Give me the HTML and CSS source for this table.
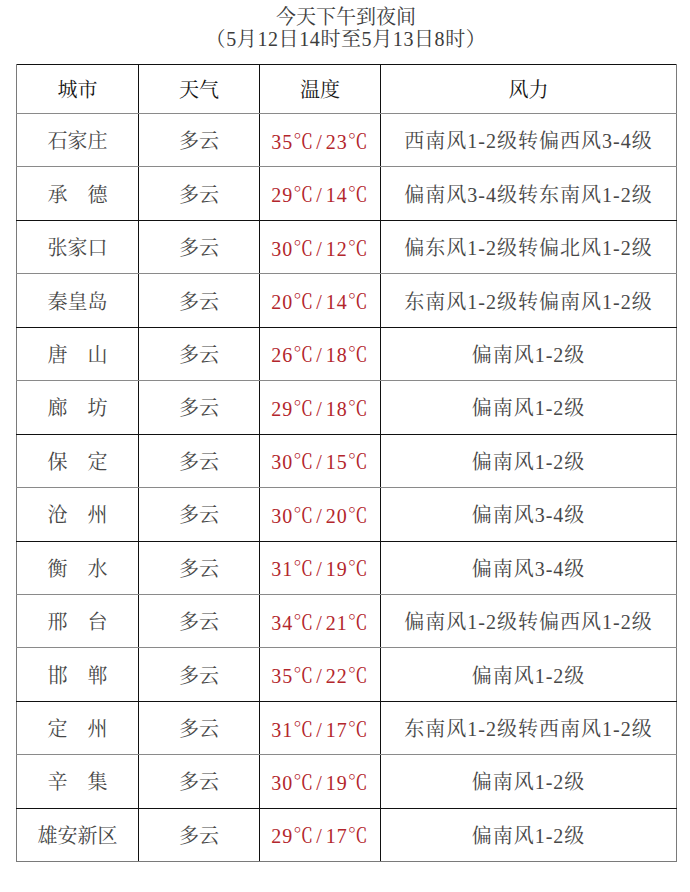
FILE: index.html
```html
<!DOCTYPE html>
<html lang="zh-CN">
<head>
<meta charset="utf-8">
<title>今天下午到夜间</title>
<link rel="stylesheet" href="styles.css">
</head>
<body>
<div class="page">
  <div class="title">
    <div>今天下午到夜间</div>
    <div class="sub">（5月12日14时至5月13日8时）</div>
  </div>
  <table class="wx">
    <colgroup>
      <col class="c1"><col class="c2"><col class="c3"><col class="c4">
    </colgroup>
    <thead>
      <tr class="head"><th>城市</th><th>天气</th><th>温度</th><th>风力</th></tr>
    </thead>
    <tbody>
      <tr><td>石家庄</td><td>多云</td><td class="t">35<span class="deg">℃</span><span class="sl">/</span>23<span class="deg">℃</span></td><td class="w">西南风1-2级转偏西风3-4级</td></tr>
      <tr class="dk"><td>承　德</td><td>多云</td><td class="t">29<span class="deg">℃</span><span class="sl">/</span>14<span class="deg">℃</span></td><td class="w">偏南风3-4级转东南风1-2级</td></tr>
      <tr><td>张家口</td><td>多云</td><td class="t">30<span class="deg">℃</span><span class="sl">/</span>12<span class="deg">℃</span></td><td class="w">偏东风1-2级转偏北风1-2级</td></tr>
      <tr class="dk"><td>秦皇岛</td><td>多云</td><td class="t">20<span class="deg">℃</span><span class="sl">/</span>14<span class="deg">℃</span></td><td class="w">东南风1-2级转偏南风1-2级</td></tr>
      <tr><td>唐　山</td><td>多云</td><td class="t">26<span class="deg">℃</span><span class="sl">/</span>18<span class="deg">℃</span></td><td class="w">偏南风1-2级</td></tr>
      <tr class="dk"><td>廊　坊</td><td>多云</td><td class="t">29<span class="deg">℃</span><span class="sl">/</span>18<span class="deg">℃</span></td><td class="w">偏南风1-2级</td></tr>
      <tr><td>保　定</td><td>多云</td><td class="t">30<span class="deg">℃</span><span class="sl">/</span>15<span class="deg">℃</span></td><td class="w">偏南风1-2级</td></tr>
      <tr class="dk"><td>沧　州</td><td>多云</td><td class="t">30<span class="deg">℃</span><span class="sl">/</span>20<span class="deg">℃</span></td><td class="w">偏南风3-4级</td></tr>
      <tr><td>衡　水</td><td>多云</td><td class="t">31<span class="deg">℃</span><span class="sl">/</span>19<span class="deg">℃</span></td><td class="w">偏南风3-4级</td></tr>
      <tr><td>邢　台</td><td>多云</td><td class="t">34<span class="deg">℃</span><span class="sl">/</span>21<span class="deg">℃</span></td><td class="w">偏南风1-2级转偏西风1-2级</td></tr>
      <tr class="dk"><td>邯　郸</td><td>多云</td><td class="t">35<span class="deg">℃</span><span class="sl">/</span>22<span class="deg">℃</span></td><td class="w">偏南风1-2级</td></tr>
      <tr><td>定　州</td><td>多云</td><td class="t">31<span class="deg">℃</span><span class="sl">/</span>17<span class="deg">℃</span></td><td class="w">东南风1-2级转西南风1-2级</td></tr>
      <tr class="dk"><td>辛　集</td><td>多云</td><td class="t">30<span class="deg">℃</span><span class="sl">/</span>19<span class="deg">℃</span></td><td class="w">偏南风1-2级</td></tr>
      <tr class="last"><td>雄安新区</td><td>多云</td><td class="t">29<span class="deg">℃</span><span class="sl">/</span>17<span class="deg">℃</span></td><td class="w">偏南风1-2级</td></tr>
    </tbody>
  </table>
</div>
</body>
</html>
```

FILE: styles.css
```css
html, body {
  margin: 0;
  padding: 0;
  background: #ffffff;
}

body {
  font-family: "Liberation Serif", "Noto Serif CJK SC", "Noto Sans CJK SC", serif;
  color: #444;
}

.page {
  width: 690px;
  height: 892px;
  padding: 0 14px 0 16px;
  box-sizing: border-box;
}

.title {
  padding-top: 6px;
  height: 58px;
  text-align: center;
  font-size: 20px;
  line-height: 22px;
  color: #3c3c3c;
}

.title .sub {
  letter-spacing: 0.6px;
}

.wx {
  width: 660px;
  border-collapse: collapse;
  table-layout: fixed;
  border-left: 1px solid #7a7a7a;
  border-right: 1px solid #7a7a7a;
  border-top: 1px solid #111;
}

.c1 { width: 122px; }
.c2 { width: 121px; }
.c3 { width: 121px; }
.c4 { width: 296px; }

.wx th,
.wx td {
  padding: 2px 0 0 0;
  text-align: center;
  font-size: 20px;
  line-height: 24px;
  font-weight: normal;
  border-left: 1px solid #111;
  border-bottom: 1px solid #8a8a8a;
  white-space: nowrap;
}

.wx th:first-child,
.wx td:first-child {
  border-left: 1px solid #7a7a7a;
}

.head th {
  height: 46px;
  color: #151515;
}

.wx td {
  height: 50.45px;
  color: #474747;
}

.wx tr.dk td {
  border-bottom: 1px solid #111;
}

.wx tr.last td {
  border-bottom: 1px solid #7a7a7a;
}

.wx td.t {
  color: #b3262c;
  letter-spacing: 1px;
}

.wx td.t .deg {
  font-family: "Noto Serif CJK SC", "Noto Sans CJK SC", sans-serif;
  font-size: 20px;
}

.wx td.t .sl {
  margin: 0 3px 0 2px;
}

.wx td.w {
  letter-spacing: 1px;
}
```
